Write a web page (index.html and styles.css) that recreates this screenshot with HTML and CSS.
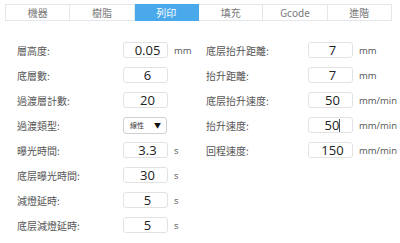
FILE: index.html
```html
<!DOCTYPE html>
<html lang="zh-Hant">
<head>
    <meta charset="UTF-8">
    <title>列印設定</title>
    <link rel="stylesheet" href="styles.css">
</head>
<body>
    <div class="tabs">
        <div class="tab">機器</div>
        <div class="tab">樹脂</div>
        <div class="tab active">列印</div>
        <div class="tab">填充</div>
        <div class="tab">Gcode</div>
        <div class="tab">進階</div>
    </div>

    <div class="settings">
        <div class="column left">
            <div class="row"><span class="label">層高度:</span><div class="field">0.05</div><span class="unit">mm</span></div>
            <div class="row"><span class="label">底層數:</span><div class="field">6</div></div>
            <div class="row"><span class="label">過渡層計數:</span><div class="field">20</div></div>
            <div class="row"><span class="label">過渡類型:</span><div class="select"><span>線性</span><span class="arrow">▼</span></div></div>
            <div class="row"><span class="label">曝光時間:</span><div class="field">3.3</div><span class="unit">s</span></div>
            <div class="row"><span class="label">底层曝光時間:</span><div class="field">30</div><span class="unit">s</span></div>
            <div class="row"><span class="label">減燈延時:</span><div class="field">5</div><span class="unit">s</span></div>
            <div class="row"><span class="label">底层減燈延時:</span><div class="field">5</div><span class="unit">s</span></div>
        </div>
        <div class="column right">
            <div class="row"><span class="label">底层抬升距離:</span><div class="field">7</div><span class="unit">mm</span></div>
            <div class="row"><span class="label">抬升距離:</span><div class="field">7</div><span class="unit">mm</span></div>
            <div class="row"><span class="label">底层抬升速度:</span><div class="field">50</div><span class="unit">mm/min</span></div>
            <div class="row"><span class="label">抬升速度:</span><div class="field">50<span class="caret"></span></div><span class="unit">mm/min</span></div>
            <div class="row"><span class="label">回程速度:</span><div class="field">150</div><span class="unit">mm/min</span></div>
        </div>
    </div>
</body>
</html>
```

FILE: styles.css
```css
body {
    margin: 0;
    background-color: white;
    font-family: "Noto Sans CJK TC", "Noto Sans", sans-serif;
    color: #333;
}
.tabs {
    display: flex;
    margin: 4px 0 0 5px;
    width: 387px;
}
.tab {
    flex: 1;
    height: 15px;
    line-height: 15px;
    border: 1px solid #e3e6ea;
    border-left: none;
    text-align: center;
    font-size: 10px;
    color: #777;
}
.tab:first-child {
    border-left: 1px solid #e3e6ea;
}
.tab.active {
    background-color: #4aa9ea;
    border-color: #4aa9ea;
    color: white;
}
.settings {
    display: flex;
    margin-top: 21px;
}
.column {
    display: flex;
    flex-direction: column;
    gap: 9px;
}
.left {
    padding-left: 17px;
    width: 189px;
}
.row {
    display: flex;
    align-items: center;
    height: 16px;
}
.left .label {
    width: 106px;
}
.right .label {
    width: 102px;
}
.label {
    font-size: 10px;
    color: #555;
}
.field {
    box-sizing: border-box;
    width: 45px;
    height: 16px;
    border: 1px solid #e2e2e2;
    border-radius: 3px;
    text-align: center;
    padding-left: 4px;
    font-family: "Open Sans", "Noto Sans", sans-serif;
    font-size: 13px;
    line-height: 14px;
    color: #222;
}
.caret {
    display: inline-block;
    width: 1px;
    height: 13px;
    background-color: #555;
    vertical-align: -2px;
}
.unit {
    margin-left: 6px;
    font-family: "Open Sans", "Noto Sans", sans-serif;
    font-size: 9.5px;
    color: #555;
}
.select {
    box-sizing: border-box;
    display: flex;
    justify-content: space-between;
    align-items: center;
    width: 44px;
    height: 17px;
    padding: 0 5px 0 6px;
    border: 1px solid #d0d0d0;
    border-radius: 3px;
    font-size: 7px;
    color: #333;
}
.select .arrow {
    font-size: 7px;
    color: #111;
}
```
